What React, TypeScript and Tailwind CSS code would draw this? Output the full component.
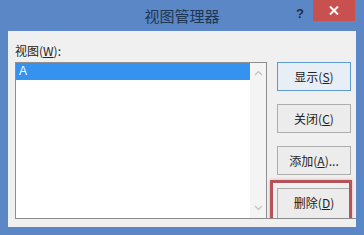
import React from 'react';

const font = { fontFamily: '"Microsoft YaHei", "Noto Sans CJK SC", "Noto Sans", sans-serif' };

function DialogButton({ label, hotkey, suffix = '', primary = false, tall = false }: { label: string; hotkey: string; suffix?: string; primary?: boolean; tall?: boolean }) {
  return (
    <div
      className={`${tall ? 'h-[33px] pb-[4px]' : 'h-[29px]'} w-[74px] shrink-0 flex items-center justify-center text-[12px] text-[#222] border ${
        primary ? 'border-[#5b9bd1] bg-[#e8eef5]' : 'border-[#adadad] bg-[#ececec]'
      }`}
    >
      {label}(<span className="underline">{hotkey}</span>){suffix}
    </div>
  );
}

export default function App() {
  return (
    <div className="w-[364px] h-[235px] bg-[#5b87c6] flex flex-col overflow-hidden" style={font}>
      {/* title bar */}
      <div className="h-[31px] shrink-0 relative flex items-center justify-center">
        <span className="text-[15px] text-[#1d3550] mt-[1px]">视图管理器</span>
        <span className="absolute left-[296px] top-[4px] text-[13px] font-bold text-[#1f2f45]" style={{ fontFamily: '"Liberation Sans", sans-serif' }}>?</span>
        <div className="absolute left-[313px] top-0 w-[42px] h-[21px] bg-[#c8504f] flex items-center justify-center">
          <svg width="10" height="9" viewBox="0 0 10 9">
            <path d="M1 0.5 L9 8.5 M9 0.5 L1 8.5" stroke="#fff" strokeWidth="2" />
          </svg>
        </div>
      </div>

      {/* client area */}
      <div className="mx-[8px] h-[196px] bg-[#f0f0f0] flex flex-col">
        <div className="pl-[7px] pt-[11px] h-[31px] text-[12px] text-[#222]">
          视图(<span className="underline">W</span>):
        </div>
        <div className="ml-[7px] h-[157px] flex border-b border-[#8a8a8a] overflow-hidden">
          {/* list box */}
          <div className="w-[252px] border-t border-l border-r border-[#8f8f8f] bg-white flex">
            <div className="flex-1">
              <div className="h-[17px] bg-[#3592ee] text-white text-[12px] leading-[17px] pl-[3px]" style={{ fontFamily: '"Liberation Sans", sans-serif' }}>A</div>
            </div>
            <div className="w-[16px] bg-[#f4f4f4] flex flex-col justify-between items-center pt-[7px] pb-[7px]">
              <svg width="9" height="6" viewBox="0 0 9 6">
                <path d="M1 5 L4.5 1.5 L8 5" stroke="#c0c0c0" strokeWidth="1.2" fill="none" />
              </svg>
              <svg width="9" height="6" viewBox="0 0 9 6">
                <path d="M1 1 L4.5 4.5 L8 1" stroke="#c0c0c0" strokeWidth="1.2" fill="none" />
              </svg>
            </div>
          </div>
          {/* buttons */}
          <div className="ml-[10px] flex flex-col gap-[13px]">
            <DialogButton label="显示" hotkey="S" primary />
            <DialogButton label="关闭" hotkey="C" />
            <DialogButton label="添加" hotkey="A" suffix="..." />
            <div className="relative">
              <DialogButton label="删除" hotkey="D" tall />
              <div className="absolute left-[-7px] top-[-8px] w-[82px] h-[60px] border-[3px] border-[#b4545a] shadow-[0_0_3px_#e7a5a8]" />
            </div>
          </div>
        </div>
      </div>
    </div>
  );
}
